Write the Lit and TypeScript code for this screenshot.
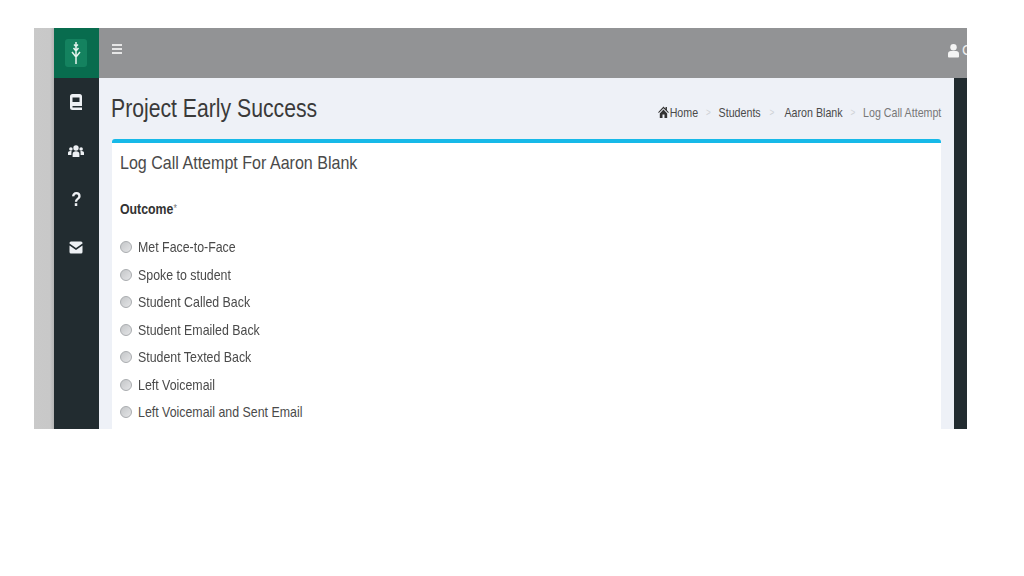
import { LitElement, html, css } from "lit";
import { customElement } from "lit/decorators.js";

const OPTIONS = [
  "Met Face-to-Face",
  "Spoke to student",
  "Student Called Back",
  "Student Emailed Back",
  "Student Texted Back",
  "Left Voicemail",
  "Left Voicemail and Sent Email",
];

@customElement("app-root")
export class AppRoot extends LitElement {
  static styles = css`
    :host {
      display: block;
      width: 1024px;
      height: 576px;
      background: #fff;
      padding: 28px 57px 147px 34px;
      box-sizing: border-box;
      font-family: "Liberation Sans", Arial, sans-serif;
      overflow: hidden;
    }
    .frame {
      display: flex;
      width: 933px;
      height: 401px;
      overflow: hidden;
      filter: blur(0.4px);
    }
    .strip {
      width: 20px;
      flex: none;
      background: linear-gradient(90deg, #c9c9c9 0, #c8c8c8 80%, #b4b4b4 100%);
    }
    .side {
      width: 45px;
      flex: none;
      background: #222c30;
      display: flex;
      flex-direction: column;
      align-items: center;
    }
    .brand {
      width: 45px;
      height: 50px;
      background: #086c4e;
      display: flex;
      align-items: center;
      justify-content: center;
    }
    .brand-tile {
      width: 22px;
      height: 28px;
      background: #14825f;
      border-radius: 3px;
      display: flex;
      align-items: center;
      justify-content: center;
      margin-left: -1px;
    }
    .nav {
      display: flex;
      flex-direction: column;
      align-items: center;
      padding-top: 15px;
      margin-left: -1px;
    }
    .item {
      height: 48.500px;
      display: flex;
      justify-content: center;
    }
    .item svg { display: block; width: 14px; height: 18px; }
    .item .users { width: 16px; }
    .q {
      font-size: 21px;
      line-height: 18px;
      font-weight: 700;
      color: #eef1f4;
      display: block;
      transform: scaleX(0.8);
    }
    .main {
      flex: 1;
      min-width: 0;
      display: flex;
      flex-direction: column;
    }
    .top {
      height: 50px;
      flex: none;
      background: #929395;
      display: flex;
      align-items: center;
      justify-content: space-between;
      padding: 0 0 0 13px;
      overflow: hidden;
    }
    .burger { display: block; width: 10px; height: 12px; margin-top: -8px; }
    .user {
      display: flex;
      align-items: center;
      gap: 3px;
      color: #eee;
      font-size: 14px;
      width: 19px;
      flex: none;
      margin-top: -6px;
    }
    .user svg { flex: none; width: 11px; height: 15px; }
    .body {
      flex: 1;
      min-height: 0;
      display: flex;
      background: #222c30;
    }
    .content {
      width: 855px;
      flex: none;
      background: #eef1f7;
      padding: 0 13px;
      box-sizing: border-box;
      overflow: hidden;
    }
    .head {
      height: 61px;
      display: flex;
      align-items: center;
      justify-content: space-between;
    }
    h1 {
      margin: 0 0 0 -1px;
      font-size: 25px;
      font-weight: 400;
      color: #3a3a3a;
      white-space: nowrap;
      transform: scaleX(0.848);
      transform-origin: left center;
    }
    .crumbs {
      display: flex;
      align-items: center;
      font-size: 13px;
      color: #4a4a4a;
      padding-top: 7px;
      white-space: nowrap;
      transform: scaleX(0.82);
      transform-origin: right center;
    }
    .crumbs svg { width: 15px; height: 12px; display: block; }
    .sep { color: #cfd2d6; margin: 0 9.600px; font-size: 10px; }
    .sep.wide { margin: 0 12.600px 0 10.600px; }
    .crumbs .current { color: #777; }
    .card {
      background: #fff;
      border-top: 4px solid #17b9e8;
      border-radius: 3px 3px 0 0;
      padding: 7px 8px 0;
      height: 300px;
    }
    h2 {
      margin: 0;
      font-size: 19px;
      font-weight: 400;
      color: #4a4a4a;
      line-height: 26px;
      white-space: nowrap;
      transform: scaleX(0.845);
      transform-origin: left center;
    }
    .label {
      margin: 25px 0 16px;
      font-size: 14px;
      font-weight: 700;
      color: #333;
      line-height: 16px;
      transform: scaleX(0.88);
      transform-origin: left center;
    }
    .label span { font-weight: 400; color: #777; font-size: 10px; vertical-align: 2px; }
    .options { display: flex; flex-direction: column; }
    .opt {
      height: 27.500px;
      display: flex;
      align-items: center;
      gap: 6px;
      font-size: 15px;
      color: #4a4a4a;
    }
    .opt-text {
      display: block;
      white-space: nowrap;
      transform: scaleX(0.825);
      transform-origin: left center;
    }
    .radio {
      width: 10px;
      height: 10px;
      flex: none;
      margin-top: 1px;
      border-radius: 50%;
      border: 1px solid #a9acaf;
      background: linear-gradient(135deg, #c4c6c8, #e4e5e7);
    }
  `;

  render() {
    return html`
      <div class="frame">
        <div class="strip"></div>
        <div class="side">
          <div class="brand">
            <div class="brand-tile">
              <svg width="12" height="24" viewBox="0 0 12 24" fill="none" stroke="#e4f3ed" stroke-width="1.500">
                <path d="M6 1v22M6 16L2 11M6 16l4-5M6 10L3.500 7M6 10l2.500-3M6 5.500L4 3.500M6 5.500l2-2"/>
              </svg>
            </div>
          </div>
          <div class="nav">
            <div class="item">
              <svg viewBox="0 0 14 18"><path fill="#eef1f4" d="M1 3.500A2.500 2.500 0 0 1 3.500 1h7A2.500 2.500 0 0 1 13 3.500V17H3.500A2.500 2.500 0 0 1 1 14.500z"/><path fill="#222c30" d="M3.500 4.500h7v4.500h-7zM3.500 13h9.500v1.500H3.500z"/></svg>
            </div>
            <div class="item">
              <svg class="users" viewBox="0 0 16 18"><g fill="#eef1f4"><circle cx="8" cy="6" r="2.700"/><circle cx="2.900" cy="7" r="1.800"/><circle cx="13.100" cy="7" r="1.800"/><path d="M4.600 15v-3c0-1.800 1.500-2.800 3.400-2.800s3.400 1 3.400 2.800v3zM0 13v-2.300c0-1 1-1.800 2.400-1.800.6 0 1 .1 1.300.3-.3.600-.3 2-.3 3.800zM16 13v-2.300c0-1-1-1.800-2.400-1.800-.6 0-1 .1-1.300.3.300.6.300 2 .3 3.800z"/></g></svg>
            </div>
            <div class="item"><span class="q">?</span></div>
            <div class="item">
              <svg viewBox="0 1 14 18"><path fill="#eef1f4" d="M.5 5A1.500 1.500 0 0 1 2 3.500h10A1.500 1.500 0 0 1 13.500 5v.5L7 10 .5 5.500zM.5 7.500L7 12l6.500-4.500V14a1.500 1.500 0 0 1-1.500 1.500H2A1.500 1.500 0 0 1 .5 14z"/></svg>
            </div>
          </div>
        </div>
        <div class="main">
          <div class="top">
            <svg class="burger" viewBox="0 0 10 12"><path fill="#e6e6e6" d="M0 1h10v2H0zM0 5h10v2H0zM0 9h10v2H0z"/></svg>
            <div class="user">
              <svg viewBox="0 0 12 15"><circle cx="6" cy="4" r="3.500" fill="#f4f4f4"/><path fill="#f4f4f4" d="M0 14v-3c0-2 1.500-3 3-3h6c1.500 0 3 1 3 3v3a1 1 0 0 1-1 1H1a1 1 0 0 1-1-1z"/></svg>
              <span>C</span>
            </div>
          </div>
          <div class="body">
            <div class="content">
              <div class="head">
                <h1>Project Early Success</h1>
                <div class="crumbs">
                  <svg viewBox="0 0 13 12"><path fill="#333" d="M6.500 .5L0 6.200l.8.900L6.500 2.200l5.700 4.900.8-.9-2.300-2V1h-1.700v1.700zM2 7.500V12h3.300V8.500h2.400V12H11V7.500L6.500 3.500z"/></svg>
                  <span>Home</span><span class="sep">&gt;</span>
                  <span>Students</span><span class="sep wide">&gt;</span>
                  <span>Aaron Blank</span><span class="sep">&gt;</span>
                  <span class="current">Log Call Attempt</span>
                </div>
              </div>
              <div class="card">
                <h2>Log Call Attempt For Aaron Blank</h2>
                <div class="label">Outcome<span>*</span></div>
                <div class="options">
                  ${OPTIONS.map((o) => html`<label class="opt"><span class="radio"></span><span class="opt-text">${o}</span></label>`)}
                </div>
              </div>
            </div>
          </div>
        </div>
      </div>
    `;
  }
}
